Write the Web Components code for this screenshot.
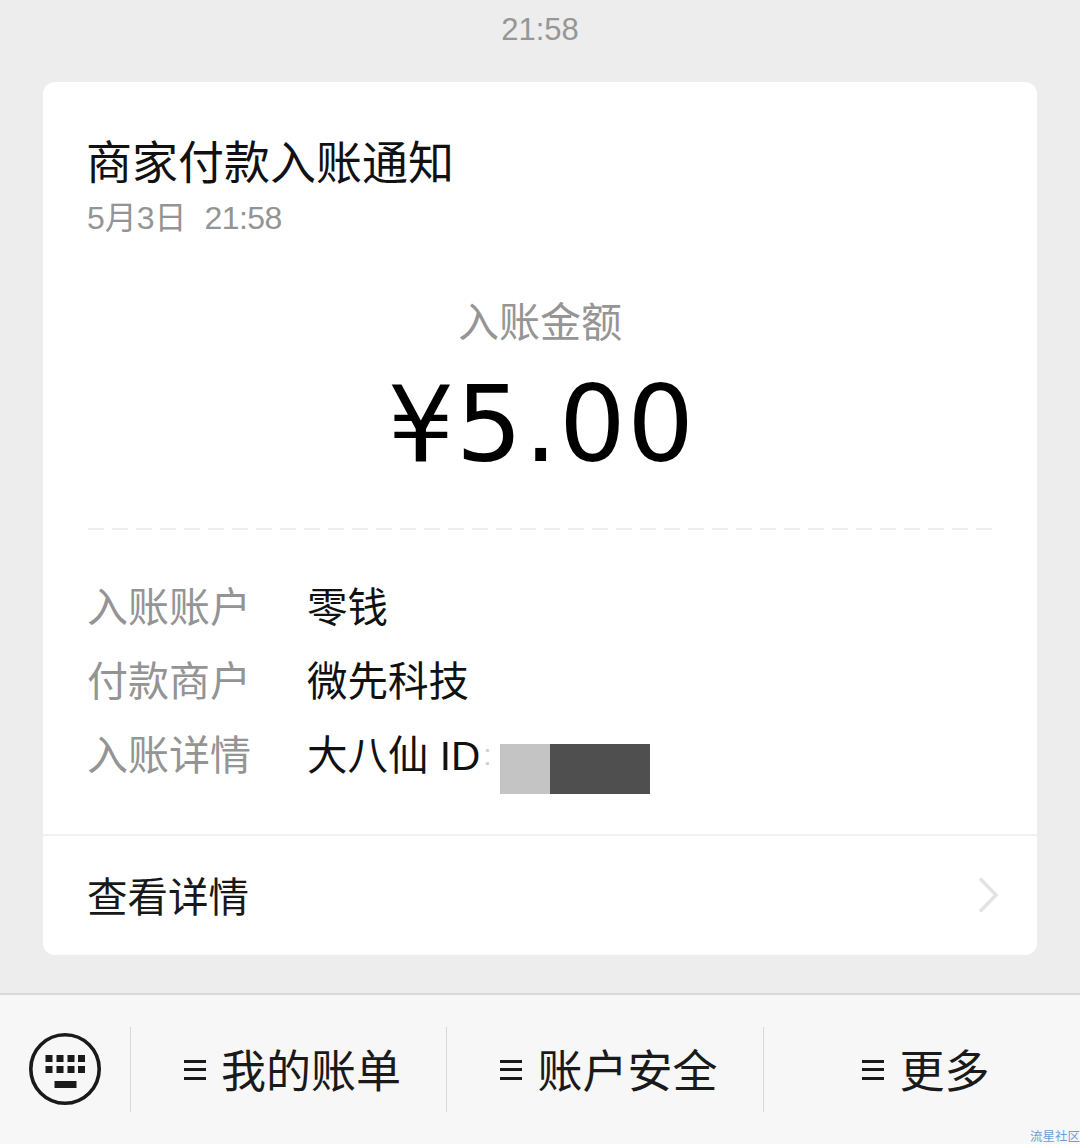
<!DOCTYPE html>
<html lang="zh">
<head>
<meta charset="utf-8">
<title>商家付款入账通知</title>
<style>
    html,body { margin:0; padding:0; }
    body {
        width:1080px;
        height:1144px;
        overflow:hidden;
        background:#ededed;
        font-family:"Liberation Sans","Noto Sans CJK SC",sans-serif;
    }
</style>
</head>
<body>
<wx-chat>
    <wx-time>21:58</wx-time>
    <wx-card title="商家付款入账通知" date="5月3日" time="21:58" label="入账金额" amount="¥5.00" link="查看详情">
        <wx-row label="入账账户">零钱</wx-row>
        <wx-row label="付款商户">微先科技</wx-row>
        <wx-row label="入账详情">大八仙 ID<wx-mask></wx-mask></wx-row>
    </wx-card>
</wx-chat>
<wx-menu>
    <wx-tab>我的账单</wx-tab>
    <wx-tab>账户安全</wx-tab>
    <wx-tab>更多</wx-tab>
</wx-menu>
<script>
    //small helper so each component is just a class with a template string
    const define = (name, html, extra) => {
        const template = document.createElement('template');
        template.innerHTML = html;
        customElements.define(name, class extends HTMLElement {
            constructor() {
                super();
                this.attachShadow({mode:'open'});
                this.shadowRoot.appendChild(template.content.cloneNode(true));
            }
            connectedCallback() {
                if (extra) extra(this);
            }
        });
    };

    define('wx-chat', `
    <style>
        :host { display:flex; flex-direction:column; align-items:center; height:993px; box-sizing:border-box; }
    </style>
    <slot></slot>`);

    define('wx-time', `
    <style>
        :host { display:block; height:82px; box-sizing:border-box; padding-top:11px; font-size:31px; line-height:38px; color:#969696; }
    </style>
    <slot></slot>`);

    define('wx-card', `
    <style>
        :host { display:block; width:994px; height:873px; box-sizing:border-box; background:#fff; border-radius:12px; color:#111; }
        .top { padding:49px 43px 0; }
        .title { font-size:46px; line-height:64px; color:#111; }
        .date { font-size:32px; line-height:44px; color:#949494; margin:1px 0 0 1px; }
        .date-time { margin-left:18px; letter-spacing:-.6px; }
        .money { display:flex; flex-direction:column; align-items:center; margin-top:55px; }
        .label { font-size:41px; line-height:56px; color:#959595; }
        .amount { font-family:"DejaVu Sans","Liberation Sans",sans-serif; font-size:105px; line-height:124px; color:#000; margin-top:12px; margin-bottom:-1px; letter-spacing:1.5px; padding-left:3px; }
        .dash { height:2px; margin:42px 42px 0 43px;
            background:repeating-linear-gradient(90deg,#eeeeee 0 16px,transparent 16px 24px) 2px 0; }
        .rows { display:flex; flex-direction:column; padding:51px 44px 0; height:304px; box-sizing:border-box; }
        .link { display:flex; align-items:center; justify-content:space-between; height:120px; box-sizing:border-box;
            border-top:2px solid #f1f1f1; padding:0 38px 2px 44px; font-size:40.5px; color:#181818; }
        svg { display:block; margin-top:2px; }
    </style>
    <div class="top">
        <div class="title"></div>
        <div class="date"><span class="date-day"></span><span class="date-time"></span></div>
    </div>
    <div class="money">
        <div class="label"></div>
        <div class="amount"></div>
    </div>
    <div class="dash"></div>
    <div class="rows"><slot></slot></div>
    <div class="link">
        <span class="link-text"></span>
        <svg width="22" height="38" viewBox="0 0 22 38"><path d="M3 2.5 L19 19 L3 35.5" fill="none" stroke="#e3e3e3" stroke-width="3.5"/></svg>
    </div>`, (el) => {
        const root = el.shadowRoot;
        root.querySelector('.title').textContent = el.getAttribute('title');
        root.querySelector('.date-day').textContent = el.getAttribute('date');
        root.querySelector('.date-time').textContent = el.getAttribute('time');
        root.querySelector('.label').textContent = el.getAttribute('label');
        root.querySelector('.amount').textContent = el.getAttribute('amount');
        root.querySelector('.link-text').textContent = el.getAttribute('link');
        el.removeAttribute('title');
    });

    define('wx-row', `
    <style>
        :host { display:flex; height:74px; font-size:40.5px; line-height:54px; align-items:flex-start; }
        .k { width:220px; flex:none; font-size:41px; color:#949494; }
        .v { color:#111; display:flex; align-items:flex-start; }
    </style>
    <span class="k"></span><span class="v"><slot></slot></span>`, (el) => {
        el.shadowRoot.querySelector('.k').textContent = el.getAttribute('label');
    });

    //the two grey blocks hiding the id in the original picture
    define('wx-mask', `
    <style>
        :host { display:inline-flex; align-items:flex-start; margin-top:15px; }
        .colon { width:20px; margin-top:-14px; font-size:30px; line-height:50px; color:#cfcfcf; padding-left:3px; box-sizing:border-box; }
        .a { width:50px; height:50px; background:#c4c4c4; }
        .b { width:100px; height:50px; background:#4f4f4f; }
    </style>
    <span class="colon">:</span><div class="a"></div><div class="b"></div>`);

    define('wx-menu', `
    <style>
        :host { display:flex; height:151px; box-sizing:border-box; border-top:2px solid #d9d9d9; background:#f7f7f7; position:relative; }
        .kb { width:130px; flex:none; display:flex; align-items:center; justify-content:center; height:149px; box-sizing:border-box; padding:0 0 2px 0; }
        .tabs { flex:1; display:grid; grid-template-columns:316px 317px 317px; align-content:start; }
        .mark { position:absolute; right:0; bottom:0; font-size:12.5px; line-height:13px; color:#6a9fd8; }
    </style>
    <div class="kb">
        <svg width="72" height="72" viewBox="0 0 72 72">
            <circle cx="36" cy="36" r="34.2" fill="none" stroke="#1a1a1a" stroke-width="3.6"/>
            <g fill="#1a1a1a">
                <rect x="16.5" y="22" width="7" height="7"/><rect x="27.5" y="22" width="7" height="7"/><rect x="38.5" y="22" width="7" height="7"/><rect x="49" y="22" width="7" height="7"/>
                <rect x="16.5" y="33" width="7" height="7"/><rect x="27.5" y="33" width="7" height="7"/><rect x="38.5" y="33" width="7" height="7"/><rect x="49" y="33" width="7" height="7"/>
                <rect x="25.5" y="48" width="22" height="7"/>
            </g>
        </svg>
    </div>
    <div class="tabs"><slot></slot></div>
    <span class="mark">流星社区</span>`);

    define('wx-tab', `
    <style>
        :host { display:flex; align-items:center; justify-content:center; gap:15px; height:85px; margin-top:32px; padding-left:8px; box-sizing:border-box;
            border-left:1px solid #d8d8d8; font-size:45px; line-height:85px; color:#1a1a1a; }
        .lines { width:22px; height:20px; flex:none; border-top:3px solid #1a1a1a; border-bottom:3px solid #1a1a1a; position:relative; box-sizing:border-box; }
        .lines::after { content:""; position:absolute; left:0; right:0; top:5px; height:3px; background:#1a1a1a; }
        .t { padding-top:5px; }
    </style>
    <span class="lines"></span><span class="t"><slot></slot></span>`);
</script>
</body>
</html>
